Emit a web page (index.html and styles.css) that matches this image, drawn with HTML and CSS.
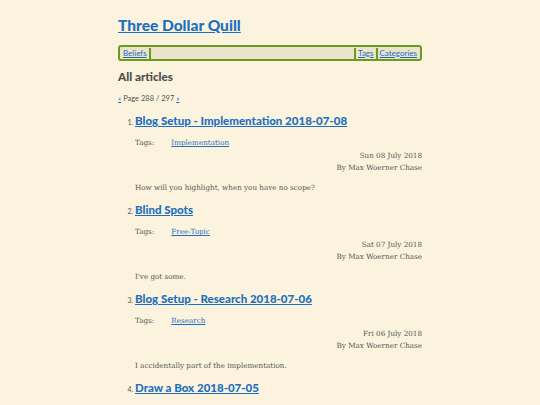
FILE: index.html
```html
<!DOCTYPE html>
<html lang="en">
<head>
    <meta charset="UTF-8">
    <meta name="viewport" content="width=device-width, initial-scale=1.0">
    <title>Three Dollar Quill</title>
    <link rel="stylesheet" href="styles.css">
</head>
<body>
    <div class="page">
        <header>
            <h1 class="site-title"><a href="#">Three Dollar Quill</a></h1>
            <nav class="menu">
                <a href="#">Beliefs</a>
                <span class="spacer"></span>
                <a href="#">Tags</a>
                <a href="#">Categories</a>
            </nav>
        </header>

        <h2 class="section-title">All articles</h2>
        <p class="pager"><a href="#">&laquo;</a> Page 288 / 297 <a href="#">&raquo;</a></p>

        <ol class="articles">
            <li>
                <h3><a href="#">Blog Setup - Implementation 2018-07-08</a></h3>
                <p class="tags"><span class="label">Tags:</span> <a href="#">Implementation</a></p>
                <p class="meta">Sun 08 July 2018<br>By Max Woerner Chase</p>
                <p class="summary">How will you highlight, when you have no scope?</p>
            </li>
            <li>
                <h3><a href="#">Blind Spots</a></h3>
                <p class="tags"><span class="label">Tags:</span> <a href="#">Free-Topic</a></p>
                <p class="meta">Sat 07 July 2018<br>By Max Woerner Chase</p>
                <p class="summary">I've got some.</p>
            </li>
            <li>
                <h3><a href="#">Blog Setup - Research 2018-07-06</a></h3>
                <p class="tags"><span class="label">Tags:</span> <a href="#">Research</a></p>
                <p class="meta">Fri 06 July 2018<br>By Max Woerner Chase</p>
                <p class="summary">I accidentally part of the implementation.</p>
            </li>
            <li>
                <h3><a href="#">Draw a Box 2018-07-05</a></h3>
            </li>
        </ol>
    </div>
</body>
</html>
```

FILE: styles.css
```css
body {
    margin: 0;
    background-color: #fbf3dd;
    color: #555;
    font-family: "DejaVu Serif", serif;
    font-size: 7.2px;
}
a {
    color: #1e6fc0;
}
.page {
    width: 304px;
    margin: 0 auto;
    padding-top: 12px;
}
.site-title {
    margin: 0 0 7px;
    font-family: Lato, sans-serif;
    font-size: 15.5px;
    font-weight: 900;
    line-height: 26px;
}
.menu {
    display: flex;
    align-items: center;
    height: 12px;
    padding: 0 1px;
    border: 2px solid #6b9a22;
    border-radius: 3px;
    background-color: #ece3cd;
    font-family: Lato, sans-serif;
    font-size: 8px;
}
.menu a {
    padding: 0 2px;
    line-height: 11px;
}
.menu a:first-child {
    border-right: 2px solid #6b9a22;
}
.menu .spacer {
    flex: 1;
}
.menu a:nth-child(3) {
    border-left: 2px solid #6b9a22;
    border-right: 2px solid #6b9a22;
}
.section-title {
    margin: 7px 0 9px;
    font-family: Lato, sans-serif;
    font-size: 11.7px;
    font-weight: 900;
    line-height: 16px;
    color: #4d4d4d;
}
.pager {
    margin: 0 0 7px;
    font-family: Lato, sans-serif;
    font-size: 7.5px;
    line-height: 12px;
}
.articles {
    margin: 0;
    padding-left: 17px;
    font-family: Lato, sans-serif;
    font-size: 7px;
}
.articles h3 {
    margin: 0 0 7px;
    font-size: 11.5px;
    font-weight: 900;
    line-height: 18px;
}
.tags, .meta, .summary {
    margin: 0;
    font-family: "DejaVu Serif", serif;
    font-size: 7.2px;
    line-height: 12px;
}
.tags .label {
    display: inline-block;
    width: 34px;
}
.meta {
    margin-top: 1px;
    text-align: right;
}
.summary {
    margin: 8px 0 7px;
}
```
